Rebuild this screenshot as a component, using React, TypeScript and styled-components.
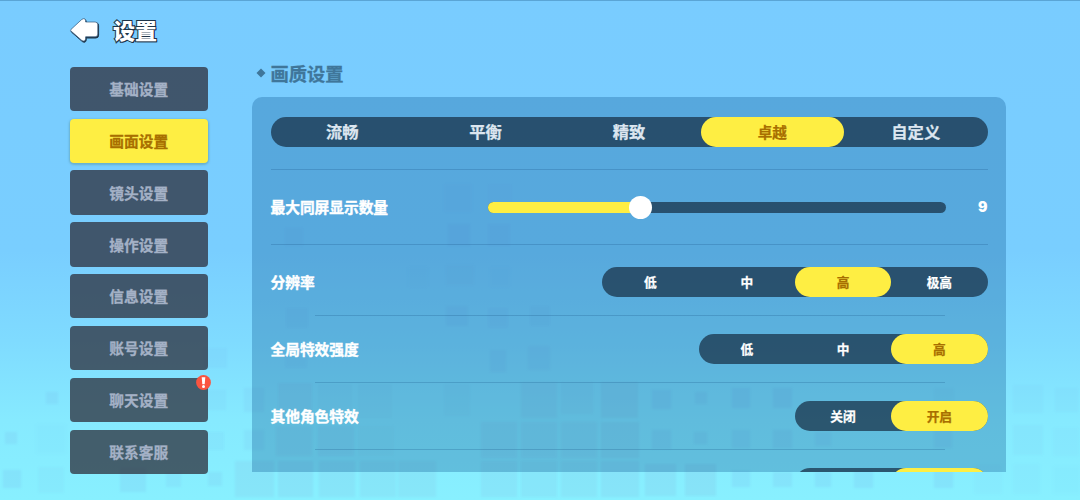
import React, {FunctionComponent} from "react";
import styled, {createGlobalStyle} from "styled-components";

const GlobalStyle = createGlobalStyle`
  body {
    margin: 0;
    font-family: "Noto Sans CJK SC", "Noto Sans", sans-serif;
    font-weight: 700;
  }

  * {
    box-sizing: border-box;
  }
`;

const Screen = styled.div`
  position: relative;
  width: 1080px;
  height: 500px;
  overflow: hidden;
  border-top: 1px solid #5aa5d6;
  background: linear-gradient(#79ccff 0, #79ceff 50%, #7fdbff 68%, #86eaff 84%, #88f0ff 100%);
`;

const Backdrop = styled.svg`
  position: absolute;
  inset: 0;
  filter: blur(1px);
`;

const Header = styled.header`
  position: relative;
  display: flex;
  align-items: center;
  gap: 13px;
  height: 60px;
  padding: 0 0 2px 69px;
`;

const BackArrow = styled.svg`
  margin-top: 1px;
`;

const Title = styled.h1`
  margin: -2px 0 0;
  font-size: 22px;
  line-height: 30px;
  font-weight: 900;
  color: #fff;
  paint-order: stroke fill;
  -webkit-text-stroke: 2px #1f3448;
  text-shadow: 1px 1px 0 #1f3448;
`;

const Body = styled.div`
  position: relative;
  display: flex;
  gap: 44.5px;
  padding-left: 70px;
`;

const Sidebar = styled.nav`
  display: flex;
  flex-direction: column;
  gap: 7.7px;
  width: 137.5px;
  padding-top: 5.7px;
`;

const NavItem = styled.button<{$active?: boolean}>`
  position: relative;
  height: 44.2px;
  padding: 0 0 .8px;
  border: 0;
  border-radius: 4px;
  font: inherit;
  font-size: 14.7px;
  line-height: 43px;
  color: ${({$active}) => ($active ? "#a86f00" : "#a4b1c6")};
  background: ${({$active}) => ($active ? "#feee43" : "rgba(43, 41, 53, .73)")};
  box-shadow: ${({$active}) => ($active ? "0 1px 2px 1px rgba(90, 150, 160, .5)" : "none")};
  -webkit-text-stroke: .3px currentColor;
`;

const Badge = styled.svg`
  position: absolute;
  top: -3px;
  right: -3px;
`;

const Content = styled.main`
  width: 754px;
`;

const SectionTitle = styled.h2`
  display: flex;
  align-items: center;
  gap: 4.5px;
  height: 36px;
  margin: 0;
  padding: 0 0 12px 4px;
  font-size: 18.3px;
  line-height: 24px;
  font-weight: 700;
  color: #3f769a;
  -webkit-text-stroke: .3px currentColor;
`;

const Panel = styled.section`
  height: 375px;
  padding: 20px 18.5px 0;
  overflow: hidden;
  border-radius: 10px 10px 0 0;
  background: rgba(10, 84, 144, .3);
`;

const Segmented = styled.div<{$large?: boolean}>`
  display: flex;
  flex: none;
  height: 30px;
  border-radius: 15px;
  font-size: ${({$large}) => ($large ? "16.3px" : "12.7px")};
  color: ${({$large}) => ($large ? "#dce6f0" : "#fff")};
  background: rgba(24, 50, 73, .74);
`;

const Segment = styled.div<{$active: boolean; $large?: boolean}>`
  display: flex;
  align-items: center;
  justify-content: center;
  width: ${({$large}) => ($large ? "143.4px" : "96.3px")};
  padding-bottom: 1.5px;
  border-radius: 15px;
  font-size: ${({$active, $large}) => ($active && $large ? "14.6px" : "inherit")};
  color: ${({$active}) => ($active ? "#a86f00" : "inherit")};
  background: ${({$active}) => ($active ? "#feee43" : "transparent")};
  -webkit-text-stroke: .25px currentColor;
`;

const Divider = styled.hr<{$inset?: boolean}>`
  height: 1px;
  margin: ${({$inset}) => ($inset ? "0 43px 0 44px" : "0")};
  border: 0;
  background: rgba(20, 80, 130, .24);
`;

const Spacer = styled.div`
  height: 22px;
`;

const Row = styled.div<{$height: number; $offset?: number}>`
  display: flex;
  align-items: center;
  justify-content: space-between;
  height: ${({$height}) => $height}px;
  padding-top: ${({$offset = 0}) => $offset}px;
  color: #fff;
`;

const Label = styled.span`
  font-size: 14.7px;
  line-height: 20px;
  -webkit-text-stroke: .4px #fff;
`;

const SliderGroup = styled.div`
  display: flex;
  align-items: center;
  justify-content: space-between;
  width: 499.5px;
`;

const Track = styled.div`
  display: flex;
  align-items: center;
  width: 458px;
  height: 11px;
  border-radius: 6px;
  background: rgba(24, 50, 73, .74);
`;

const Fill = styled.div`
  height: 11px;
  border-radius: 6px 0 0 6px;
  background: #feee43;
`;

const Knob = styled.div`
  flex: none;
  width: 23px;
  height: 23px;
  margin-left: -11.5px;
  border-radius: 50%;
  background: #fff;
`;

const SliderValue = styled.span`
  font-family: Inter, sans-serif;
  font-size: 14px;
  line-height: 16px;
  font-weight: 900;
`;

const navItems = ["基础设置", "画面设置", "镜头设置", "操作设置", "信息设置", "账号设置", "聊天设置", "联系客服"];

const options = [
  {label: "分辨率", values: ["低", "中", "高", "极高"], selected: 2, height: 70, offset: 3.5},
  {label: "全局特效强度", values: ["低", "中", "高"], selected: 2, height: 66.2},
  {label: "其他角色特效", values: ["关闭", "开启"], selected: 1, height: 66.2},
  {label: "", values: ["", ""], selected: 1, height: 66.2},
];

// x, y, width, height, opacity of each block in the backdrop
const blocks = [
  [444, 184, 28, 28, .06], [488, 184, 24, 24, .04],
  [448, 224, 22, 22, .16], [488, 224, 22, 22, .12], [285, 228, 18, 18, .08],
  [408, 267, 20, 20, .05], [446, 265, 28, 20, .07], [490, 267, 20, 20, .06],
  [286, 308, 22, 20, .11], [446, 306, 22, 20, .15], [488, 308, 20, 20, .12], [530, 306, 20, 20, .11],
  [285, 346, 22, 22, .12], [490, 350, 16, 22, .15], [528, 346, 22, 24, .13],
  [46, 392, 12, 12, .17], [5, 432, 12, 12, .18], [36, 424, 30, 30, .05],
  [3, 470, 18, 18, .2], [38, 467, 26, 26, .08], [120, 468, 26, 24, .18],
  [166, 472, 15, 15, .16], [208, 472, 14, 14, .17],
  [203, 348, 24, 20, .1], [206, 390, 20, 20, .09], [206, 432, 18, 18, .11],
  [244, 388, 20, 24, .14], [244, 430, 20, 20, .14],
  [278, 383, 34, 36, .14], [318, 384, 34, 34, .08], [358, 384, 34, 34, .08],
  [276, 426, 36, 30, .16], [318, 426, 36, 30, .15], [358, 426, 36, 30, .05],
  [235, 461, 39, 36, .17], [278, 461, 35, 36, .18], [319, 461, 36, 36, .17],
  [360, 461, 36, 36, .16], [398, 461, 38, 36, .16],
  [444, 384, 26, 32, .08], [481, 422, 36, 36, .15], [521, 422, 36, 36, .15],
  [561, 422, 36, 36, .16], [601, 422, 38, 36, .19],
  [481, 461, 36, 36, .15], [521, 461, 36, 36, .14], [561, 461, 36, 36, .16], [601, 461, 38, 36, .18],
  [521, 382, 36, 36, .16], [561, 382, 32, 32, .11], [601, 382, 37, 36, .19],
  [645, 464, 31, 32, .18], [685, 464, 31, 32, .2],
  [652, 390, 19, 19, .2], [695, 392, 12, 12, .17], [732, 388, 18, 20, .2], [773, 388, 19, 20, .18],
  [652, 430, 19, 19, .18], [694, 432, 13, 12, .17], [732, 430, 18, 18, .16], [773, 430, 19, 18, .18],
  [815, 432, 16, 14, .15], [732, 471, 18, 16, .2], [773, 472, 19, 15, .18], [815, 472, 16, 15, .2],
  [854, 470, 19, 18, .2], [934, 388, 20, 20, .08], [934, 430, 18, 18, .15], [934, 469, 19, 19, .2],
  [1013, 385, 30, 28, .08], [1055, 388, 23, 24, .08], [1013, 425, 30, 30, .08],
  [1053, 428, 26, 28, .06], [974, 464, 28, 30, .06], [1013, 464, 27, 30, .06], [1053, 466, 27, 28, .05],
];

interface SegmentedControlProps {
  values: string[];
  selected: number;
  large?: boolean;
}

const SegmentedControl: FunctionComponent<SegmentedControlProps> = ({values, selected, large}) => (
  <Segmented $large={large}>
    {values.map((value, i) => (
      <Segment key={i} $active={i === selected} $large={large}>{value}</Segment>
    ))}
  </Segmented>
);

const App: FunctionComponent = () => {
  return (
    <Screen>
      <GlobalStyle />
      <Backdrop width="1080" height="500">
        {blocks.map(([x, y, width, height, opacity], i) => (
          <rect
            key={i}
            x={x}
            y={y - 1}
            width={width}
            height={height}
            fill={width > 30 ? "#82a8d4" : "#6d92dc"}
            opacity={opacity * (width > 30 ? .8 : .6)}
          />
        ))}
      </Backdrop>
      <Header>
        <BackArrow width="31" height="27" viewBox="0 0 31 27">
          <path
            d="M2 12.4 12.8 2.4Q16 .4 16.6 3.6V5H26.2Q29 5 29 7.8V17.4Q29 20.2 26.2 20.2H16.6V22.3Q16 25.6 12.8 23.8L2 14.4Q1 13.4 2 12.4Z"
            fill="#1f3448"
            stroke="#1f3448"
            strokeWidth="1"
            transform="translate(.6 .8)"
          />
          <path
            d="M2 12.4 12.8 2.4Q16 .4 16.6 3.6V5H26.2Q28.8 5 28.8 7.8V17Q28.8 19.8 26.2 19.8H16.6V22Q16 25.2 12.8 23.4L2 14Q1 13.2 2 12.4Z"
            fill="#fff"
            stroke="#34587a"
            strokeWidth=".7"
          />
        </BackArrow>
        <Title>设置</Title>
      </Header>
      <Body>
        <Sidebar>
          {navItems.map(item => (
            <NavItem key={item} $active={item === "画面设置"}>
              {item}
              {item === "聊天设置" && (
                <Badge width="15" height="15" viewBox="0 0 15 15">
                  <circle cx="7.5" cy="7.5" r="7.4" fill="#fa5440" />
                  <path d="M5.7 2.2H9.3L8.7 9.2H6.3Z" fill="#fff" />
                  <circle cx="7.5" cy="11.5" r="1.5" fill="#fff" />
                </Badge>
              )}
            </NavItem>
          ))}
        </Sidebar>
        <Content>
          <SectionTitle>
            <svg width="10" height="10" viewBox="0 0 10 10">
              <path d="M5 .5 9.5 5 5 9.5.5 5Z" fill="#3f769a" />
            </svg>
            画质设置
          </SectionTitle>
          <Panel>
            <SegmentedControl values={["流畅", "平衡", "精致", "卓越", "自定义"]} selected={3} large />
            <Spacer />
            <Divider />
            <Row $height={74}>
              <Label>最大同屏显示数量</Label>
              <SliderGroup>
                <Track>
                  <Fill style={{width: `${(9 / 27) * 100}%`}} />
                  <Knob />
                </Track>
                <SliderValue>9</SliderValue>
              </SliderGroup>
            </Row>
            <Divider />
            {options.map(({label, values, selected, height, offset}, i) => (
              <React.Fragment key={i}>
                {i > 0 && <Divider $inset />}
                <Row $height={height} $offset={offset}>
                  <Label>{label}</Label>
                  <SegmentedControl values={values} selected={selected} />
                </Row>
              </React.Fragment>
            ))}
          </Panel>
        </Content>
      </Body>
    </Screen>
  );
};

export default App;
